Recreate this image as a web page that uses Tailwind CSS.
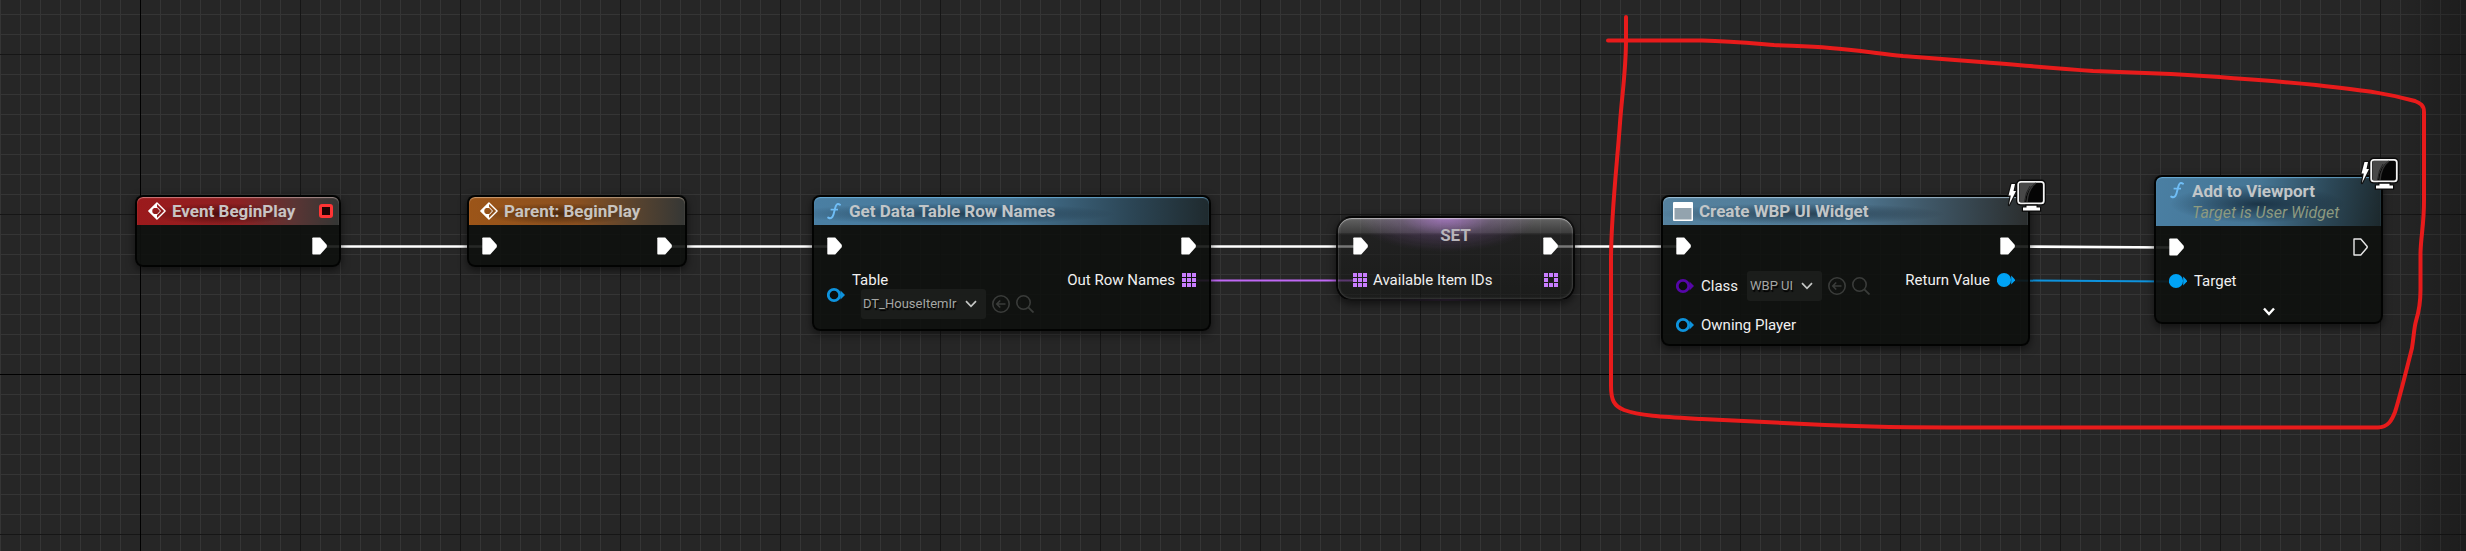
<!DOCTYPE html>
<html lang="en">
<head>
<meta charset="utf-8">
<title>Event Graph</title>
<script src="https://cdn.jsdelivr.net/npm/@tailwindcss/browser@4"></script>
</head>
<body class="bg-[#262626] font-[Roboto,sans-serif]">
<svg class="hidden" aria-hidden="true">
  <symbol id="exec" viewBox="0 0 15 18"><path d="M1 .5H8.200L14.500 7.500Q15.300 9 14.500 10.500L8.200 17.500H1Q.3 17.500 .3 16.800V1.200Q.3 .5 1 .5Z" fill="#fff"/></symbol>
  <symbol id="exec-open" viewBox="0 0 15 18"><path d="M1 1H7.800L14 8.200Q14.500 9 14 9.800L7.800 17H1Z" fill="none" stroke="#e8e8e8" stroke-width="1.400" stroke-linejoin="round"/></symbol>
  <symbol id="ring" viewBox="0 0 18 16"><path d="M13.500 3.500L18 8L13.500 12.500Z" fill="currentColor"/><circle cx="7" cy="8" r="5.700" fill="#0b0e0d" stroke="currentColor" stroke-width="2.800"/></symbol>
  <symbol id="dot" viewBox="0 0 18 16"><path d="M14.200 3.500L18.500 8L14.200 12.500Z" fill="currentColor"/><circle cx="7" cy="8" r="7.100" fill="currentColor"/></symbol>
  <symbol id="array" viewBox="0 0 14 14"><path d="M0 0h4v4H0zM5 0h4v4H5zM10 0h4v4h-4zM0 5h4v4H0zM5 5h4v4H5zM10 5h4v4h-4zM0 10h4v4H0zM5 10h4v4H5zM10 10h4v4h-4z" fill="#c87dff"/></symbol>
  <symbol id="array-open" viewBox="0 0 14 14"><path d="M0 0h4v4H0zM5 0h4v4H5zM10 0h4v4h-4zM0 5h4v4H0zM10 5h4v4h-4zM0 10h4v4H0zM5 10h4v4H5zM10 10h4v4h-4z" fill="#c87dff"/></symbol>
  <symbol id="event" viewBox="0 0 18 18"><path d="M9 .9L17.100 9L9 17.100L.9 9Z" fill="none" stroke="#fff" stroke-width="1.400" stroke-linejoin="round"/><path d="M9 .5V6H6.200Q4.200 6.500 4.200 9Q4.200 11.500 6.200 12H9V17.500L.5 9Z" fill="#fff"/><path d="M9 5.200L12.500 9L9 12.800" fill="none" stroke="#fff" stroke-width="1"/></symbol>
  <symbol id="func" viewBox="0 0 18 18"><path d="M15 2.800Q12.500 .9 11 3.600Q10.200 5.500 9.400 9Q8.600 13 7.400 14.900Q5.800 17.200 3.200 15.600" fill="none" stroke="#6fbdf5" stroke-width="1.900" stroke-linecap="round"/><path d="M5.600 7.600H13" stroke="#6fbdf5" stroke-width="1.700"/></symbol>
  <symbol id="use" viewBox="0 0 18 18"><circle cx="9" cy="9" r="8.200" fill="none" stroke="currentColor" stroke-width="1.600"/><path d="M13.500 9H5M8.200 5.500L4.800 9L8.200 12.500" fill="none" stroke="currentColor" stroke-width="1.600"/></symbol>
  <symbol id="find" viewBox="0 0 18 18"><circle cx="7.500" cy="7.500" r="6.700" fill="none" stroke="currentColor" stroke-width="1.600"/><path d="M12.300 12.300L17.500 17.500" stroke="currentColor" stroke-width="1.800"/></symbol>
  <symbol id="chevron" viewBox="0 0 12 8"><path d="M1 1.200L6 6.300L11 1.200" fill="none" stroke="currentColor" stroke-width="1.700"/></symbol>
  <symbol id="client" viewBox="0 0 40 34">
    <path d="M5.500 5H9L7.500 12H10L3 26L4.800 16.500H2.500Z" fill="#fff" stroke="#111" stroke-width="2.400" stroke-linejoin="round" paint-order="stroke"/>
    <rect x="10" y=".6" width="30" height="26" rx="4.500" fill="#0a0a0a"/>
    <rect x="12.200" y="2.800" width="25.600" height="21.600" rx="2.600" fill="#050505" stroke="#f4f4f4" stroke-width="1.800"/>
    <path d="M13.500 4H30Q20.500 9 19 23H13.500Z" fill="#484848"/><path d="M30 4Q22 10 21 23" fill="none" stroke="#333" stroke-width="1.500"/><path d="M24 7Q19.500 13 18.500 23" fill="none" stroke="#222" stroke-width="1"/>
    <path d="M20.500 26.800H30.500V28.600H34V31.600H17V28.600H20.500Z" fill="#fff" stroke="#0a0a0a" stroke-width="2.400" paint-order="stroke"/>
  </symbol>
</svg>

<main class="relative min-h-screen w-full overflow-hidden">
  <!-- Grid -->
  <svg class="absolute inset-0 size-full" aria-hidden="true">
    <defs>
      <pattern id="minor" width="20" height="20" y="14" patternUnits="userSpaceOnUse"><path d="M0 0H20V1H1V20H0Z" fill="#353535"/></pattern>
      <pattern id="major" width="160" height="160" x="140" y="54" patternUnits="userSpaceOnUse"><path d="M0 0H160V1H1V160H0Z" fill="#161616"/></pattern>
    </defs>
    <rect width="100%" height="100%" fill="url(#minor)"/>
    <rect width="100%" height="100%" fill="url(#major)"/>
    <rect x="140" width="1" height="100%"/>
    <rect y="374" width="100%" height="1"/>
  </svg>
  <div class="absolute inset-y-0 right-0 w-20 bg-linear-to-l from-black/25 to-transparent"></div>

  <!-- Wires -->
  <svg class="absolute inset-0 size-full" fill="none" aria-hidden="true">
    <path d="M326 246.500H484M671 246.500H828M1195 246.500H1354M1557 246.500H1677M2014 246.500L2170 247.500" stroke="#fff" stroke-width="2.600"/>
    <path d="M1196 280.500H1354" stroke="#c068f5" stroke-width="2"/>
    <path d="M2014 280.500L2170 281.500" stroke="#0e93dd" stroke-width="2"/>
  </svg>

  <!-- Event BeginPlay -->
  <section class="absolute left-[135px] top-[195px] w-[206px] rounded-lg border-2 border-black/80 bg-[#0e110e]/90 shadow-[0_3px_8px_rgba(0,0,0,0.55)]">
    <header class="flex h-7 items-center gap-1.5 rounded-t-md bg-[radial-gradient(ellipse_at_42%_60%,rgba(20,0,0,0.55),transparent_45%),linear-gradient(90deg,#9c1a1c_0%,#8e2022_50%,#5a3534_78%,#333634_100%)] pl-[11px] pr-1.5 shadow-[inset_0_1px_1px_rgba(255,220,220,0.5)]">
      <svg class="size-[18px]"><use href="#event"/></svg>
      <h2 class="grow whitespace-nowrap text-[17px] font-bold leading-5 text-[#c8c4c4]">Event BeginPlay</h2>
      <span class="size-3.5 rounded-[3px] border-3 border-[#ff3434] bg-[#200303]"></span>
    </header>
    <div class="flex justify-end px-3 pb-2.5 pt-3"><svg class="h-[18px] w-[15px]"><use href="#exec"/></svg></div>
  </section>

  <!-- Parent: BeginPlay -->
  <section class="absolute left-[467px] top-[195px] w-[220px] rounded-lg border-2 border-black/80 bg-[#0e110e]/90 shadow-[0_3px_8px_rgba(0,0,0,0.55)]">
    <header class="flex h-7 items-center gap-1.5 rounded-t-md bg-[radial-gradient(ellipse_at_42%_60%,rgba(20,8,0,0.55),transparent_45%),linear-gradient(90deg,#9c5518_0%,#8a5020_50%,#57432f_78%,#353735_100%)] pl-[11px] pr-1.5 shadow-[inset_0_1px_1px_rgba(255,230,200,0.5)]">
      <svg class="size-[18px]"><use href="#event"/></svg>
      <h2 class="whitespace-nowrap text-[17px] font-bold leading-5 text-[#c8c4c0]">Parent: BeginPlay</h2>
    </header>
    <div class="flex justify-between px-[13px] pb-2.5 pt-3">
      <svg class="h-[18px] w-[15px]"><use href="#exec"/></svg>
      <svg class="h-[18px] w-[15px]"><use href="#exec"/></svg>
    </div>
  </section>

  <!-- Get Data Table Row Names -->
  <section class="absolute left-[812px] top-[195px] w-[399px] rounded-lg border-2 border-black/80 bg-[#0e110e]/90 shadow-[0_3px_8px_rgba(0,0,0,0.55)]">
    <header class="flex h-7 items-center gap-1.5 rounded-t-md bg-[radial-gradient(ellipse_at_35%_60%,rgba(0,10,20,0.5),transparent_45%),linear-gradient(90deg,#4a7fa3_0%,#467594_50%,#2c4656_80%,#1f2a2e_100%)] pl-[11px] pr-1.5 shadow-[inset_0_1px_1px_rgba(120,190,235,0.7)]">
      <svg class="size-[18px]"><use href="#func"/></svg>
      <h2 class="whitespace-nowrap text-[17px] font-bold leading-5 text-[#c2c6c8]">Get Data Table Row Names</h2>
    </header>
    <div class="flex flex-col gap-4 px-[13px] pb-2.5 pt-3">
      <div class="flex justify-between">
        <svg class="h-[18px] w-[15px]"><use href="#exec"/></svg>
        <svg class="h-[18px] w-[15px]"><use href="#exec"/></svg>
      </div>
      <div class="flex items-start justify-between">
        <div class="flex items-center gap-[7px] text-[#0e93dd]">
          <svg class="h-4 w-[18px]"><use href="#ring"/></svg>
          <div>
            <label for="table" class="block text-[15px] leading-[18px] text-[#f0f0f0]">Table</label>
            <div class="flex items-center gap-1.5 pl-[9px] text-[#3a3c3a]">
              <div class="relative">
                <select id="table" class="block h-[30px] w-[125px] appearance-none rounded-[3px] bg-[#1b1d1b] pl-0.5 text-[13px] text-[#a4a6a4] [text-shadow:1px_2px_1px_#000]"><option>DT_HouseItemIr</option></select>
                <svg class="pointer-events-none absolute right-[9px] top-[11px] h-2 w-3 text-[#c4c6c4]"><use href="#chevron"/></svg>
              </div>
              <button type="button" aria-label="Use selected asset"><svg class="size-[18px]"><use href="#use"/></svg></button>
              <button type="button" aria-label="Browse to asset"><svg class="size-[18px]"><use href="#find"/></svg></button>
            </div>
          </div>
        </div>
        <div class="flex items-center gap-[7px]">
          <span class="text-[15px] leading-[18px] text-[#f0f0f0]">Out Row Names</span>
          <svg class="size-3.5"><use href="#array"/></svg>
        </div>
      </div>
    </div>
  </section>

  <!-- Set Available Item IDs -->
  <section class="absolute left-[1336px] top-[216px] w-[239px] rounded-[16px] border-2 border-black/80 bg-[radial-gradient(ellipse_90px_34px_at_46%_0%,rgba(185,125,220,0.7),rgba(150,100,180,0.25)_50%,transparent),linear-gradient(180deg,rgba(140,140,140,0.6)_0px,rgba(75,75,75,0.6)_15px,rgba(30,30,30,0.6)_16px,rgba(20,22,20,0.6)_100%)] shadow-[0_3px_8px_rgba(0,0,0,0.55),inset_0_1px_1px_rgba(255,255,255,0.45),inset_0_0_3px_rgba(255,255,255,0.25)]">
    <div class="flex flex-col gap-4 px-[15px] pb-2.5 pt-2">
      <div class="flex h-[29px] items-end justify-between">
        <svg class="h-[18px] w-[15px]"><use href="#exec"/></svg>
        <h2 class="self-start text-[17px] font-bold leading-[18px] text-[#b8b5ba]">SET</h2>
        <svg class="h-[18px] w-[15px]"><use href="#exec"/></svg>
      </div>
      <div class="flex items-center gap-1.5">
        <svg class="size-3.5"><use href="#array"/></svg>
        <span class="grow text-[15px] leading-[18px] text-[#f0f0f0]">Available Item IDs</span>
        <svg class="size-3.5"><use href="#array-open"/></svg>
      </div>
    </div>
  </section>

  <!-- Create WBP UI Widget -->
  <section class="absolute left-[1661px] top-[195px] w-[369px] rounded-lg border-2 border-black/80 bg-[#0e110e]/90 shadow-[0_3px_8px_rgba(0,0,0,0.55)]">
    <svg class="absolute -right-[18px] -top-[18px] h-[34px] w-10"><use href="#client"/></svg>
    <header class="flex h-7 items-center gap-1.5 rounded-t-md bg-[radial-gradient(ellipse_at_38%_60%,rgba(0,10,20,0.5),transparent_45%),linear-gradient(90deg,#55829f_0%,#507a96_50%,#3b4f5c_78%,#2b2e2e_100%)] pl-2.5 pr-1.5 shadow-[inset_0_1px_1px_rgba(190,220,240,0.7)]">
      <svg class="h-[19px] w-5" viewBox="0 0 20 19"><rect width="20" height="19" rx="1" fill="#fff"/><rect x="1.500" y="6" width="17" height="11.500" fill="#93a3ae"/></svg>
      <h2 class="whitespace-nowrap text-[17px] font-bold leading-5 text-[#c2c6c8]">Create WBP UI Widget</h2>
    </header>
    <div class="flex flex-col gap-4 px-[13px] pb-2.5 pt-3">
      <div class="flex justify-between">
        <svg class="h-[18px] w-[15px]"><use href="#exec"/></svg>
        <svg class="h-[18px] w-[15px]"><use href="#exec"/></svg>
      </div>
      <div class="flex items-start justify-between">
        <div class="flex flex-col gap-[15px]">
          <div class="flex items-center text-[#3a3c3a]">
            <svg class="h-4 w-[18px] text-[#5606a8]"><use href="#ring"/></svg>
            <label for="class" class="ml-[7px] text-[15px] leading-[18px] text-[#f0f0f0]">Class</label>
            <div class="relative ml-[9px] mr-1.5">
              <select id="class" class="block h-[30px] w-[75px] appearance-none rounded-[3px] bg-[#1b1d1b] pl-[3px] text-[13px] text-[#a4a6a4] [text-shadow:1px_2px_1px_#000]"><option>WBP UI</option></select>
              <svg class="pointer-events-none absolute right-[9px] top-[11px] h-2 w-3 text-[#c4c6c4]"><use href="#chevron"/></svg>
            </div>
            <button type="button" class="mr-1.5" aria-label="Use selected class"><svg class="size-[18px]"><use href="#use"/></svg></button>
            <button type="button" aria-label="Browse to class"><svg class="size-[18px]"><use href="#find"/></svg></button>
          </div>
          <div class="flex items-center gap-[7px] text-[#0e93dd]">
            <svg class="h-4 w-[18px]"><use href="#ring"/></svg>
            <span class="text-[15px] leading-[18px] text-[#f0f0f0]">Owning Player</span>
          </div>
        </div>
        <div class="flex items-center gap-[7px] text-[#00a2f5]">
          <span class="text-[15px] leading-[18px] text-[#f0f0f0]">Return Value</span>
          <svg class="h-4 w-[18px]"><use href="#dot"/></svg>
        </div>
      </div>
    </div>
  </section>

  <!-- Add to Viewport -->
  <section class="absolute left-[2154px] top-[175px] w-[229px] rounded-lg border-2 border-black/80 bg-[#0e110e]/90 shadow-[0_3px_8px_rgba(0,0,0,0.55)]">
    <svg class="absolute -right-[18px] -top-5 h-[34px] w-10"><use href="#client"/></svg>
    <header class="flex h-[49px] gap-1.5 rounded-t-md bg-[radial-gradient(ellipse_at_45%_55%,rgba(0,10,20,0.6),transparent_50%),linear-gradient(100deg,#4a7fa3_0%,#457594_45%,#2c4858_75%,#1c282c_100%)] pl-3 pr-1.5 pt-1 shadow-[inset_0_1px_1px_rgba(120,190,235,0.7)]">
      <svg class="size-[18px]"><use href="#func"/></svg>
      <div class="whitespace-nowrap">
        <h2 class="text-[17px] font-bold leading-5 text-[#c2c6c8]">Add to Viewport</h2>
        <p class="pt-0.5 text-[16px] italic leading-5 text-[#8d9a80]">Target is User Widget</p>
      </div>
    </header>
    <div class="flex flex-col gap-4 px-[13px] pt-3">
      <div class="flex justify-between">
        <svg class="h-[18px] w-[15px]"><use href="#exec"/></svg>
        <svg class="h-[18px] w-[15px]"><use href="#exec-open"/></svg>
      </div>
      <div class="flex items-center gap-[7px] text-[#00a2f5]">
        <svg class="h-4 w-[18px]"><use href="#dot"/></svg>
        <span class="text-[15px] leading-[18px] text-[#f0f0f0]">Target</span>
      </div>
    </div>
    <button type="button" class="mx-auto mb-0.5 mt-3 flex h-[18px] w-5 items-center justify-center text-white" aria-label="Show advanced pins">
      <svg class="h-[9px] w-3" viewBox="0 0 12 9"><path d="M1 1.500L6 7L11 1.500" fill="none" stroke="currentColor" stroke-width="2.400"/></svg>
    </button>
  </section>

  <!-- Hand-drawn highlight -->
  <svg class="pointer-events-none absolute inset-0 size-full" fill="none" stroke="#e81b1b" stroke-linecap="round" stroke-linejoin="round" aria-hidden="true">
    <path d="M1626 17V40C1626 70 1622 95 1620 123C1617 165 1611 215 1611 260V386C1611 400 1614 406 1624 410C1640 416 1665 417 1702 419L1825 425C1870 427 1910 427.500 1970 427.500H2378C2388 427.500 2392 420 2395 412C2399 400 2407 368 2412 348C2414 335 2414 328 2416 321C2420 308 2420.500 300 2420.500 290V253C2421 235 2424 225 2424 200V112C2424 105 2420 103 2415 101C2390 94 2370 91 2316 85C2265 80 2220 77 2171 74L2093 71C2050 68 2020 65 1981 62L1903 56C1875 53 1855 50 1830 48C1810 46 1795 46 1774 45C1750 43 1730 41 1702 40.500H1608" stroke-width="4"/>
  </svg>
</main>
</body>
</html>
